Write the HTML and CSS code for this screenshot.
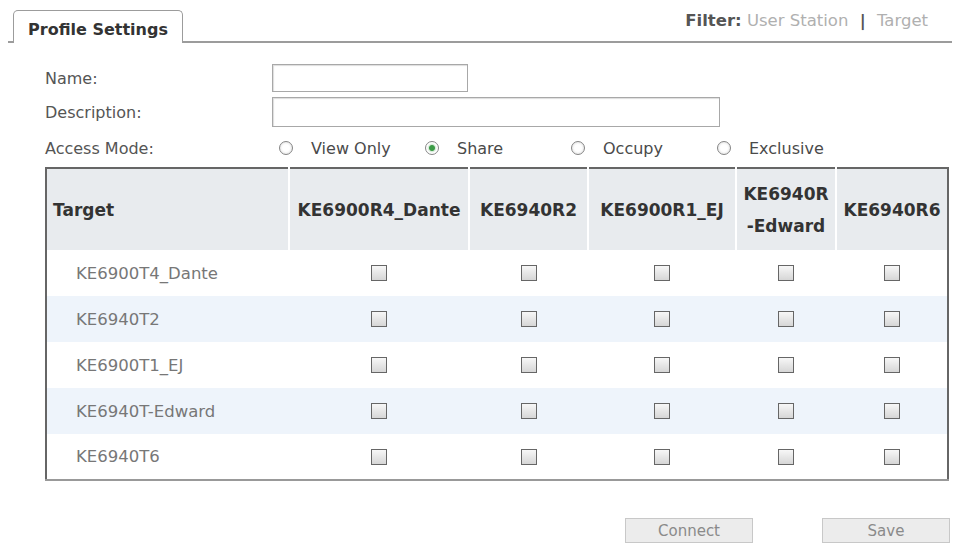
FILE: index.html
```html
<!DOCTYPE html>
<html lang="en">
<head>
  <meta charset="UTF-8">
  <meta name="viewport" content="width=device-width, initial-scale=1.0">
  <title>Profile Settings</title>
  <link rel="stylesheet" href="styles.css">
</head>
<body>
  <div class="tabbar">
    <div class="tab">Profile Settings</div>
    <div class="filter">
      <span class="filter-label">Filter:</span>
      <span class="filter-link">User Station</span>
      <span class="filter-sep">|</span>
      <span class="filter-link">Target</span>
    </div>
  </div>

  <div class="form">
    <div class="form-row name-row">
      <label for="profileName">Name:</label>
      <input type="text" id="profileName" class="name-input">
    </div>
    <div class="form-row desc-row">
      <label for="profileDesc">Description:</label>
      <input type="text" id="profileDesc" class="desc-input">
    </div>
    <div class="form-row access-row">
      <label>Access Mode:</label>
      <div class="options">
        <label class="option"><input type="radio" name="mode">View Only</label>
        <label class="option"><input type="radio" name="mode" checked>Share</label>
        <label class="option"><input type="radio" name="mode">Occupy</label>
        <label class="option"><input type="radio" name="mode">Exclusive</label>
      </div>
    </div>
  </div>

  <table class="targets">
    <colgroup>
      <col class="col-target">
      <col class="col-dante">
      <col class="col-r2">
      <col class="col-ej">
      <col class="col-edward">
      <col class="col-r6">
    </colgroup>
    <thead>
      <tr>
        <th class="first">Target</th>
        <th>KE6900R4_Dante</th>
        <th>KE6940R2</th>
        <th>KE6900R1_EJ</th>
        <th>KE6940R<br>-Edward</th>
        <th>KE6940R6</th>
      </tr>
    </thead>
    <tbody>
      <tr>
        <td class="name">KE6900T4_Dante</td>
        <td><input type="checkbox"></td>
        <td><input type="checkbox"></td>
        <td><input type="checkbox"></td>
        <td><input type="checkbox"></td>
        <td><input type="checkbox"></td>
      </tr>
      <tr>
        <td class="name">KE6940T2</td>
        <td><input type="checkbox"></td>
        <td><input type="checkbox"></td>
        <td><input type="checkbox"></td>
        <td><input type="checkbox"></td>
        <td><input type="checkbox"></td>
      </tr>
      <tr>
        <td class="name">KE6900T1_EJ</td>
        <td><input type="checkbox"></td>
        <td><input type="checkbox"></td>
        <td><input type="checkbox"></td>
        <td><input type="checkbox"></td>
        <td><input type="checkbox"></td>
      </tr>
      <tr>
        <td class="name">KE6940T-Edward</td>
        <td><input type="checkbox"></td>
        <td><input type="checkbox"></td>
        <td><input type="checkbox"></td>
        <td><input type="checkbox"></td>
        <td><input type="checkbox"></td>
      </tr>
      <tr>
        <td class="name">KE6940T6</td>
        <td><input type="checkbox"></td>
        <td><input type="checkbox"></td>
        <td><input type="checkbox"></td>
        <td><input type="checkbox"></td>
        <td><input type="checkbox"></td>
      </tr>
    </tbody>
  </table>

  <div class="actions">
    <button>Connect</button>
    <button>Save</button>
  </div>
</body>
</html>
```

FILE: styles.css
```css
* {
  box-sizing: border-box;
  margin: 0;
  padding: 0;
  font-family: "DejaVu Sans", Verdana, sans-serif;
}

body {
  background: #fff;
  color: #555;
  font-size: 16px;
}

/* tab strip */
.tabbar {
  display: flex;
  height: 43px;
  margin: 0 4px 0 8px;
  padding-top: 10px;
  border-bottom: 2px solid #9c9c9c;
}

.tab {
  width: 170px;
  height: 33px;
  margin-left: 5px;
  margin-bottom: -2px;
  padding-top: 9px;
  background: #fff;
  border: 1px solid #9c9c9c;
  border-bottom: none;
  border-radius: 5px 5px 0 0;
  text-align: center;
  font-size: 16px;
  font-weight: bold;
  color: #333;
}

.filter {
  align-self: flex-start;
  margin-left: auto;
  margin-right: 24px;
  line-height: 22px;
  font-size: 16.5px;
  color: #b0b0b0;
}

.filter-label {
  color: #555;
  font-weight: bold;
}

.filter-sep {
  margin: 0 6px;
  color: #555;
  font-weight: bold;
}

/* form */
.form {
  padding-left: 45px;
  margin-top: 21px;
}

.form-row {
  display: flex;
  align-items: center;
}

.form-row > label {
  width: 227px;
  color: #555;
}

.name-row {
  height: 28px;
  margin-bottom: 5px;
}

.desc-row {
  height: 30px;
}

.access-row {
  height: 28px;
  margin-top: 7px;
}

.form-row input[type="text"] {
  height: 100%;
  border: 1px solid #a8a8a8;
  box-shadow: inset 1px 1px 1px #ddd;
}

.name-input {
  width: 196px;
}

.desc-input {
  width: 448px;
}

.options {
  display: flex;
  margin-left: 7px;
}

.option {
  display: inline-flex;
  align-items: center;
  width: 146px;
  color: #4a4a4a;
}

.option input {
  appearance: none;
  width: 14px;
  height: 14px;
  margin-right: 18px;
  border: 1px solid #858585;
  border-radius: 50%;
  background: radial-gradient(circle, #fff 40%, #d8d8d8 100%);
}

.option input:checked {
  background: radial-gradient(circle, #3c9b46 0 2.5px, #d6ead8 3.5px, #fff 5px);
}

/* target table */
.targets {
  margin: 5px 0 0 45px;
  width: 902px;
  table-layout: fixed;
  border-collapse: collapse;
  border: 2px solid #666;
  border-bottom-color: #999;
}

.col-target { width: 243px; }
.col-dante { width: 180px; }
.col-r2 { width: 119px; }
.col-ej { width: 148px; }
.col-edward { width: 100px; }
.col-r6 { width: 112px; }

.targets th {
  height: 82px;
  background: #e8ebee;
  border-left: 2px solid #fff;
  color: #333;
  font-size: 17px;
  font-weight: bold;
  line-height: 32px;
  text-align: center;
  white-space: nowrap;
}

.targets th.first {
  border-left: none;
  text-align: left;
  padding-left: 6px;
}

.targets td {
  height: 46px;
  text-align: center;
}

.targets tbody tr:nth-child(even) td {
  background: #eef4fb;
}

.targets td.name {
  text-align: left;
  padding-left: 29px;
  color: #777;
  font-size: 16.5px;
}

.targets input[type="checkbox"] {
  appearance: none;
  display: block;
  margin: 0 auto;
  width: 16px;
  height: 16px;
  border: 1.5px solid #666;
  background: linear-gradient(#f7f7f7, #d6d6d6);
}

/* buttons */
.actions {
  display: flex;
  justify-content: flex-end;
  gap: 69px;
  margin-top: 37px;
  padding-right: 6px;
}

.actions button {
  width: 128px;
  height: 25px;
  background: #ececec;
  border: 1px solid #c8c8c8;
  color: #8a8a8a;
  font-size: 15px;
}
```
